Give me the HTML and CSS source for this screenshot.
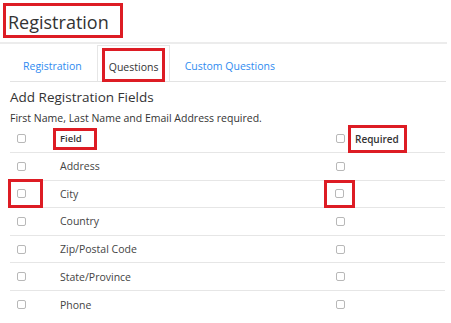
FILE: index.html
```html
<!DOCTYPE html>
<html>
<head>
<meta charset="utf-8">
<link rel="stylesheet" href="styles.css">
</head>
<body>
<div class="header">
  <h1 class="title mark">Registration</h1>
</div>
<div class="tabs">
  <div class="tab">Registration</div>
  <div class="tab active"><span class="mark tab-mark">Questions</span></div>
  <div class="tab">Custom Questions</div>
</div>
<div class="section">
  <h2 class="section-title">Add Registration Fields</h2>
  <p class="note">First Name, Last Name and Email Address required.</p>
  <div class="table">
    <div class="row head">
      <div class="c-check"><span class="box"></span></div>
      <div class="c-field"><span class="mark field-mark">Field</span></div>
      <div class="c-req"><span class="box"></span><span class="mark req-mark">Required</span></div>
    </div>
    <div class="row">
      <div class="c-check"><span class="box"></span></div>
      <div class="c-field">Address</div>
      <div class="c-req"><span class="box"></span></div>
    </div>
    <div class="row">
      <div class="c-check"><span class="mark check-mark"><span class="box"></span></span></div>
      <div class="c-field">City</div>
      <div class="c-req"><span class="mark reqbox-mark"><span class="box"></span></span></div>
    </div>
    <div class="row">
      <div class="c-check"><span class="box"></span></div>
      <div class="c-field">Country</div>
      <div class="c-req"><span class="box"></span></div>
    </div>
    <div class="row">
      <div class="c-check"><span class="box"></span></div>
      <div class="c-field">Zip/Postal Code</div>
      <div class="c-req"><span class="box"></span></div>
    </div>
    <div class="row">
      <div class="c-check"><span class="box"></span></div>
      <div class="c-field">State/Province</div>
      <div class="c-req"><span class="box"></span></div>
    </div>
    <div class="row last">
      <div class="c-check"><span class="box"></span></div>
      <div class="c-field">Phone</div>
      <div class="c-req"><span class="box"></span></div>
    </div>
  </div>
</div>
</body>
</html>
```
FILE: styles.css
```css
* { box-sizing: border-box; }
html, body { margin: 0; padding: 0; background: #fff; }
body {
  font-family: "Open Sans", "Noto Sans", sans-serif;
  color: #333;
  width: 451px;
  height: 323px;
  overflow: hidden;
}
.mark { border: 3px solid #dd1c24; display: inline-flex; align-items: center; }

.header {
  height: 44px;
  border-bottom: 2px solid #ececec;
  width: 447px;
  padding: 3px 0 0 3px;
}
.title {
  margin: 0;
  font-size: 18px;
  font-weight: 400;
  width: 120px;
  height: 35px;
  padding: 2px 0 0 2px;
  line-height: 1;
  color: #333;
}

.tabs {
  display: flex;
  margin-left: 10px;
  width: 436px;
  height: 38px;
  border-bottom: 1px solid #e3e3e3;
  font-size: 10.5px;
  color: #2f8bf0;
}
.tab {
  display: flex;
  align-items: center;
  padding: 5px 13px 0;
  margin-top: 1px;
}
.tab.active {
  padding: 0 4px;
  margin: 1px 2px 0 2px;
  border: 1px solid #e6e6e6;
  border-bottom: none;
  background: #fff;
  align-items: flex-end;
  color: #333;
}
.tab-mark {
  width: 63px;
  height: 34px;
  padding: 3px 0 0 4px;
  margin-bottom: -1px;
}

.section { padding-left: 10px; }
.section-title {
  margin: 6px 0 0;
  font-size: 13.5px;
  font-weight: 400;
  line-height: 18px;
  color: #333;
}
.note {
  margin: 4px 0 0;
  font-size: 10.5px;
  line-height: 16px;
  color: #333;
}

.table { width: 435px; margin-top: 0; }
.row {
  display: flex;
  align-items: center;
  height: 27.6px;
  border-bottom: 1px solid #e6e6e6;
  font-size: 10.5px;
  color: #444;
}
.row.head { height: 28px; margin-top: -1px; }
.row.last { border-bottom: none; }
.c-check { width: 43px; display: flex; align-items: center; padding-left: 7px; }
.c-field { flex: 1; display: flex; align-items: center; padding-left: 7px; }
.c-req { width: 119px; display: flex; align-items: center; padding-left: 10px; }

.box {
  display: inline-block;
  width: 9px;
  height: 9px;
  border: 1px solid #b8b8b8;
  border-radius: 2px;
  background: #fff;
}

.field-mark {
  margin-left: -7px;
  width: 44px;
  height: 22px;
  padding-left: 4px;
  font-size: 9.5px;
  font-weight: 600;
  color: #333;
}
.req-mark {
  margin-left: 3px;
  width: 59px;
  height: 28px;
  padding-left: 4px;
  font-size: 10px;
  font-weight: 600;
  color: #333;
}
.check-mark {
  margin-left: -9px;
  width: 35px;
  height: 29px;
  padding-left: 6px;
}
.reqbox-mark {
  margin-left: -12px;
  width: 31px;
  height: 28px;
  justify-content: center;
}
```
